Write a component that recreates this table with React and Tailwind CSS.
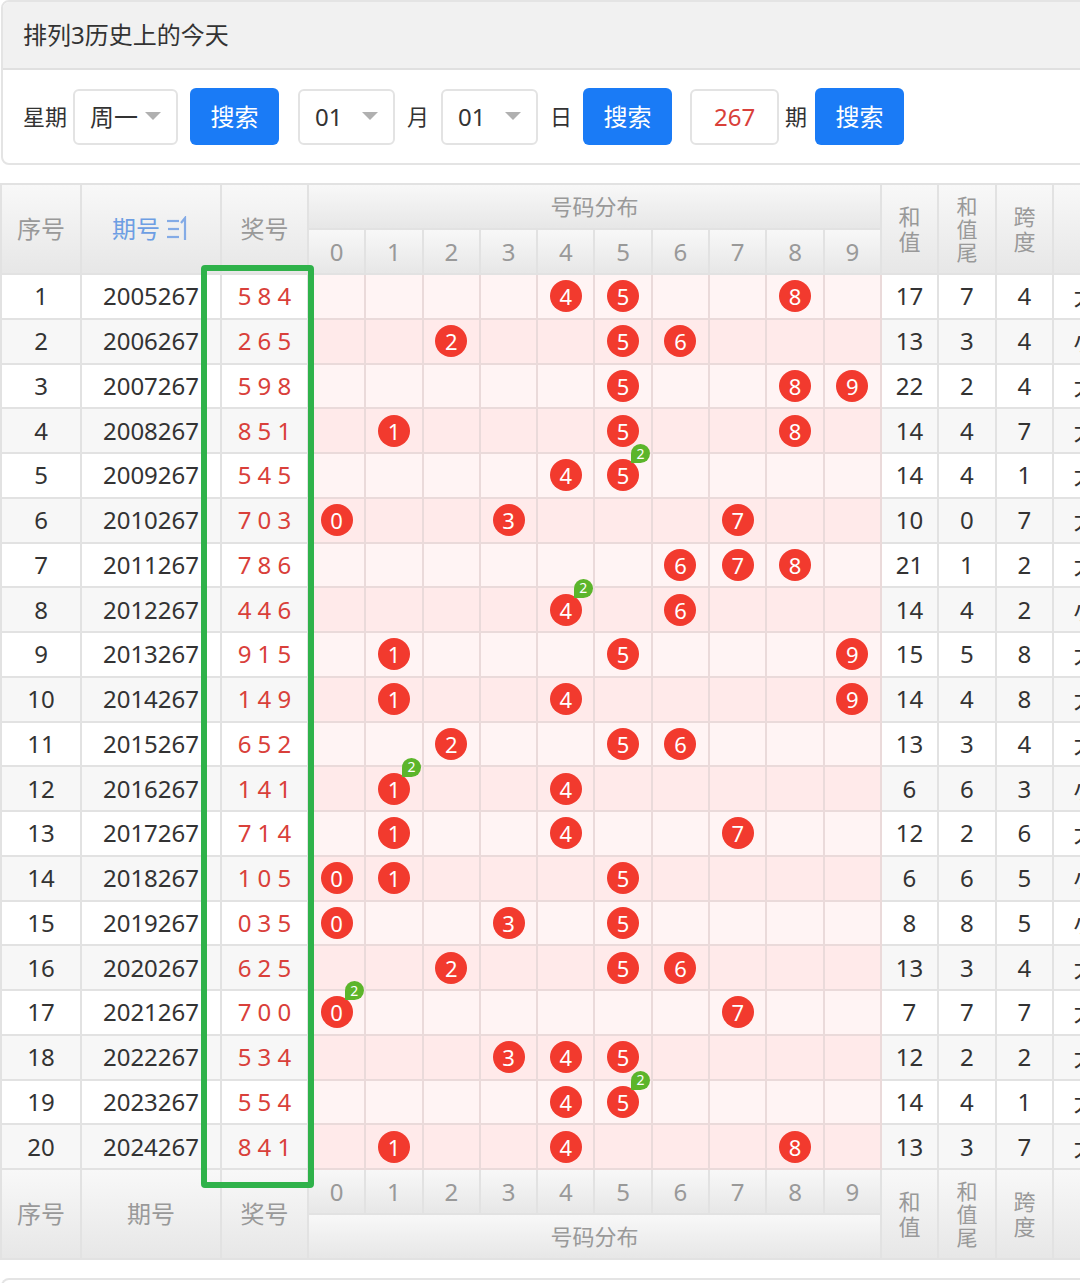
const rows = [
  ['2005267', '584', 17, 7, 4, '大'],
  ['2006267', '265', 13, 3, 4, '小'],
  ['2007267', '598', 22, 2, 4, '大'],
  ['2008267', '851', 14, 4, 7, '大'],
  ['2009267', '545', 14, 4, 1, '大'],
  ['2010267', '703', 10, 0, 7, '大'],
  ['2011267', '786', 21, 1, 2, '大'],
  ['2012267', '446', 14, 4, 2, '小'],
  ['2013267', '915', 15, 5, 8, '大'],
  ['2014267', '149', 14, 4, 8, '大'],
  ['2015267', '652', 13, 3, 4, '大'],
  ['2016267', '141', 6, 6, 3, '小'],
  ['2017267', '714', 12, 2, 6, '大'],
  ['2018267', '105', 6, 6, 5, '小'],
  ['2019267', '035', 8, 8, 5, '小'],
  ['2020267', '625', 13, 3, 4, '大'],
  ['2021267', '700', 7, 7, 7, '大'],
  ['2022267', '534', 12, 2, 2, '大'],
  ['2023267', '554', 14, 4, 1, '大'],
  ['2024267', '841', 13, 3, 7, '大'],
];

const digits = [0, 1, 2, 3, 4, 5, 6, 7, 8, 9];

function Caret() {
  return (
    <svg width="16" height="9" viewBox="0 0 16 9" className="shrink-0">
      <path d="M0 0 H16 L8 8 Z" fill="#b0b0b0" />
    </svg>
  );
}

function SortIcon() {
  return (
    <svg width="24" height="26" viewBox="0 0 24 26" className="ml-[6px]">
      <g stroke="#84abe6" strokeWidth="2.2" fill="none">
        <path d="M1 5 H13" />
        <path d="M2 13 H13" />
        <path d="M1 21 H13" />
        <path d="M19 24 V2 L15 7" />
      </g>
    </svg>
  );
}

function Ball({ n, count }) {
  return (
    <span className="relative inline-flex h-[32px] w-[32px] items-center justify-center rounded-full bg-[#f23a2e] text-[22px] leading-none text-white">
      {n}
      {count > 1 && (
        <span className="absolute left-[24px] top-[-15px] flex h-[19px] w-[19px] items-center justify-center rounded-full rounded-bl-none bg-[#5cb52b] text-[14px] leading-none text-white">
          {count}
        </span>
      )}
    </span>
  );
}

const th = 'border-2 border-[#e2e2e2] bg-linear-to-b from-[#f8f8f8] to-[#e7e7e7] font-normal text-[#999] text-center';

function Select({ value, w }) {
  return (
    <div className={`flex h-[56px] ${w} items-center justify-between rounded-md border-2 border-[#e3e3e3] bg-white pl-[15px] pr-[15px] text-[24px] text-[#333]`}>
      <span>{value}</span>
      <Caret />
    </div>
  );
}

function Btn() {
  return (
    <div className="flex h-[57px] w-[89px] items-center justify-center rounded-md bg-[#1a7bf6] text-[24px] text-white">
      搜索
    </div>
  );
}

export default function App() {
  return (
    <div
      className="w-[1080px] overflow-hidden bg-white"
      style={{ fontFamily: "'Noto Sans', 'Noto Sans CJK SC', sans-serif" }}
    >
      <div className="w-[1110px]">
        <div className="ml-px w-[1100px] overflow-hidden rounded-lg border-2 border-[#e4e4e4]">
          <div className="flex h-[68px] items-center border-b-2 border-[#e0e0e0] bg-[#f1f1f1] pl-[20px] text-[24px] text-[#333]">
            排列3历史上的今天
          </div>
          <div className="flex h-[93px] items-center pl-[20px] text-[22px] text-[#333]">
            <span className="mr-[6px]">星期</span>
            <Select value="周一" w="w-[105px]" />
            <div className="ml-[12px]">
              <Btn />
            </div>
            <div className="ml-[19px]">
              <Select value="01" w="w-[97px]" />
            </div>
            <span className="ml-[12px] mr-[12px]">月</span>
            <Select value="01" w="w-[97px]" />
            <span className="ml-[12px] mr-[11px]">日</span>
            <Btn />
            <div className="ml-[18px] flex h-[56px] w-[89px] items-center justify-center rounded-md border-2 border-[#e3e3e3] text-[24px] text-[#d9403a]">
              267
            </div>
            <span className="ml-[6px] mr-[8px]">期</span>
            <Btn />
          </div>
        </div>

        <div className="relative mt-[18px]">
          <table className="table-fixed border-collapse text-[24px] text-[#333]" style={{ width: 1116 }}>
            <colgroup>
              <col style={{ width: 80 }} />
              <col style={{ width: 140 }} />
              <col style={{ width: 87 }} />
              {digits.map((d) => (
                <col key={d} style={{ width: 57.3 }} />
              ))}
              <col style={{ width: 57 }} />
              <col style={{ width: 58 }} />
              <col style={{ width: 57 }} />
              <col style={{ width: 65 }} />
            </colgroup>
            <thead>
              <tr className="h-[45px]">
                <th rowSpan={2} className={th}>序号</th>
                <th rowSpan={2} className={th}>
                  <span className="inline-flex items-center text-[#6d9ee3]">
                    期号
                    <SortIcon />
                  </span>
                </th>
                <th rowSpan={2} className={th}>奖号</th>
                <th colSpan={10} className={th + ' text-[22px]'}>号码分布</th>
                <th rowSpan={2} className={th + ' text-[22px] leading-[25px]'}>和<br />值</th>
                <th rowSpan={2} className={th + ' text-[21px] leading-[23px]'}>和<br />值<br />尾</th>
                <th rowSpan={2} className={th + ' text-[22px] leading-[25px]'}>跨<br />度</th>
                <th rowSpan={2} className={th}></th>
              </tr>
              <tr className="h-[45px]">
                {digits.map((d) => (
                  <th key={d} className={th + ' font-light'}>{d}</th>
                ))}
              </tr>
            </thead>
            <tbody>
              {rows.map((r, i) => {
                const even = i % 2 === 1;
                const base = even ? 'bg-[#f7f7f7]' : 'bg-white';
                const pink = even ? 'bg-[#ffeaea]' : 'bg-[#fff4f4]';
                const nums = r[1].split('').map(Number);
                return (
                  <tr key={r[0]} className="h-[44.75px]">
                    <td className={`border-2 border-[#e2e2e2] text-center ${base}`}>{i + 1}</td>
                    <td className={`border-2 border-[#e2e2e2] text-center ${base}`}>{r[0]}</td>
                    <td className={`border-2 border-[#e2e2e2] text-center text-[#d9403a] ${base}`}>
                      {nums.join(' ')}
                    </td>
                    {digits.map((d) => {
                      const c = nums.filter((x) => x === d).length;
                      return (
                        <td key={d} className={`border-2 border-[#eadada] p-0 text-center leading-none ${pink}`}>
                          {c > 0 && <Ball n={d} count={c} />}
                        </td>
                      );
                    })}
                    <td className={`border-2 border-[#e2e2e2] text-center ${base}`}>{r[2]}</td>
                    <td className={`border-2 border-[#e2e2e2] text-center ${base}`}>{r[3]}</td>
                    <td className={`border-2 border-[#e2e2e2] text-center ${base}`}>{r[4]}</td>
                    <td className={`border-2 border-[#e2e2e2] text-center ${base}`}>{r[5]}</td>
                  </tr>
                );
              })}
            </tbody>
            <tfoot>
              <tr className="h-[45px]">
                <th rowSpan={2} className={th}>序号</th>
                <th rowSpan={2} className={th}>期号</th>
                <th rowSpan={2} className={th}>奖号</th>
                {digits.map((d) => (
                  <th key={d} className={th + ' font-light'}>{d}</th>
                ))}
                <th rowSpan={2} className={th + ' text-[22px] leading-[25px]'}>和<br />值</th>
                <th rowSpan={2} className={th + ' text-[21px] leading-[23px]'}>和<br />值<br />尾</th>
                <th rowSpan={2} className={th + ' text-[22px] leading-[25px]'}>跨<br />度</th>
                <th rowSpan={2} className={th}></th>
              </tr>
              <tr className="h-[45px]">
                <th colSpan={10} className={th + ' text-[22px]'}>号码分布</th>
              </tr>
            </tfoot>
          </table>
          <div className="pointer-events-none absolute left-[201px] top-[82px] h-[923px] w-[113px] rounded-[4px] border-[6px] border-[#2fb24a]" />
        </div>

        <div className="ml-px mt-[18px] h-[40px] w-[1100px] rounded-t-lg border-2 border-b-0 border-[#e4e4e4]" />
      </div>
    </div>
  );
}
